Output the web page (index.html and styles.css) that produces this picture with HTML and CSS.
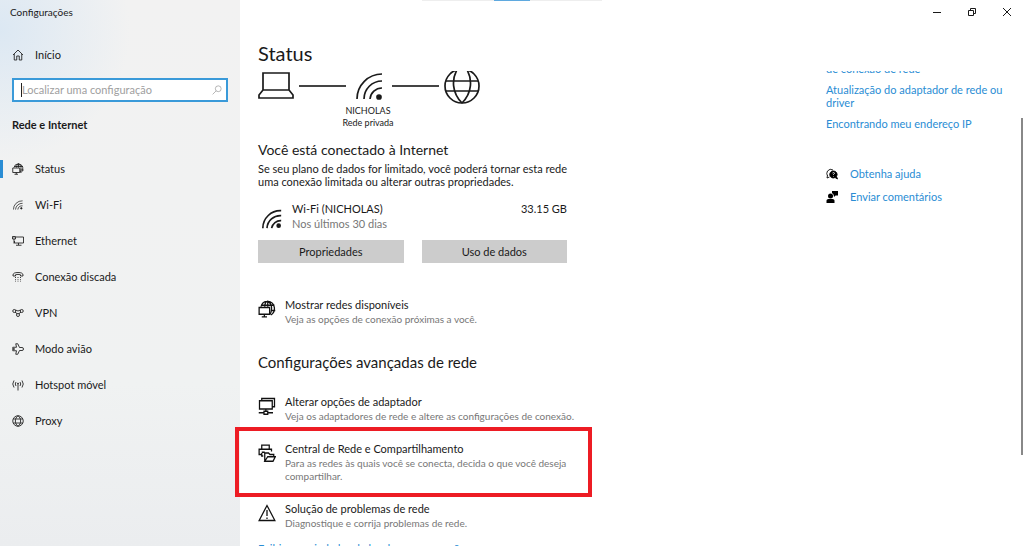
FILE: index.html
```html
<!DOCTYPE html>
<html lang="pt-BR">
<head>
    <meta charset="UTF-8">
    <meta name="viewport" content="width=device-width, initial-scale=1.0">
    <title>Configurações</title>
    <link rel="stylesheet" href="styles.css">
</head>
<body>
    <!-- Shared icons -->
    <svg class="sprite" aria-hidden="true">
        <symbol id="wifi" viewBox="0 0 24 24">
            <path d="M1 23A21 21 0 0 1 23 2M6 23A16 16 0 0 1 23 8M11.500 23A11 11 0 0 1 23 14"/>
            <circle cx="20" cy="20" r="1.800" fill="currentColor"/>
        </symbol>
        <symbol id="globe" viewBox="0 0 24 24">
            <circle cx="12" cy="12" r="10.5"/>
            <path d="M2.5 8h19M2.5 16h19M12 1.5C5 6 5 18 12 22.5M12 1.5C19 6 19 18 12 22.5"/>
        </symbol>
        <symbol id="globe-pc" viewBox="0 0 24 24">
            <path d="M4 9A10 9 0 0 1 13 1.500A10 10 0 0 1 17 20M5 7h17M17 14h6M9 9C9 5 11 2 13 1.500C17 4 18.500 8 18 12Q18 16 16 19M13 2v7"/>
            <path d="M1.500 10h14v9h-14zM8.500 19v3.500M5 22.500h7"/>
        </symbol>
    </svg>

    <div class="window">
        <aside class="sidebar">
            <div class="app-name">Configurações</div>
            <a class="nav-item home" href="#">
                <svg class="icon" viewBox="0 0 24 24"><path d="M2 12L12 2l10 10M4.500 10v12h5v-8h5v8h5V10"/></svg>
                Início
            </a>
            <div class="search">
                <input type="text" id="search" placeholder="Localizar uma configuração" aria-label="Localizar uma configuração">
                <span class="caret"></span>
                <svg class="search-icon" viewBox="0 0 24 24"><circle cx="15" cy="9" r="7"/><path d="M10 14L1.500 22.500"/></svg>
            </div>
            <h2 class="category">Rede e Internet</h2>
            <nav>
                <a class="nav-item active" href="#"><svg class="icon"><use href="#globe-pc"/></svg>Status</a>
                <a class="nav-item" href="#"><svg class="icon small"><use href="#wifi"/></svg>Wi-Fi</a>
                <a class="nav-item" href="#">
                    <svg class="icon" viewBox="0 0 24 24"><path d="M8 4h15v12H5v-4M1 3h6v5H1zM4 8v9M13 16v4M8 20.500h11M3 5.500h2"/></svg>
                    Ethernet
                </a>
                <a class="nav-item" href="#">
                    <svg class="icon" viewBox="0 0 24 24"><path d="M2 8Q2 3 12 3t10 5v2h-5V7.500Q12 6 7 7.500V10H2z"/><path stroke-dasharray="2 2.500" d="M7 12v10M12 12v10M17 12v10"/></svg>
                    Conexão discada
                </a>
                <a class="nav-item" href="#">
                    <svg class="icon" viewBox="0 0 24 24"><circle cx="4.500" cy="8" r="3"/><circle cx="19.500" cy="8" r="3"/><circle cx="12" cy="16" r="3"/><path d="M7 6q5 4 10 0M6 10.500q4 1 4 3.500M18 10.500q-4 1-4 3.500"/></svg>
                    VPN
                </a>
                <a class="nav-item" href="#">
                    <svg class="icon" viewBox="0 0 24 24"><path d="M9 8.500L7.500 1.500h4L15 9h5q3 0 3 3t-3 3h-5l-3.500 7.500h-4L9 15.500H1.500v-3h4M9 8.500H1.500v3h4"/></svg>
                    Modo avião
                </a>
                <a class="nav-item" href="#">
                    <svg class="icon" viewBox="0 0 24 24"><path d="M12 9v14M4 3q-5 7 0 14M8 6q-3 4 0 8M20 3q5 7 0 14M16 6q3 4 0 8"/><circle cx="12" cy="9" r="1"/></svg>
                    Hotspot móvel
                </a>
                <a class="nav-item" href="#"><svg class="icon"><use href="#globe"/></svg>Proxy</a>
            </nav>
        </aside>

        <main class="main">
            <header class="titlebar">
                <button type="button" aria-label="Minimizar"><svg viewBox="0 0 10 10"><path d="M1 5.500h8"/></svg></button>
                <button type="button" aria-label="Restaurar"><svg viewBox="0 0 10 10"><path d="M1.500 3.500h5v5h-5zM3.500 3.500v-2h5v5h-2"/></svg></button>
                <button type="button" aria-label="Fechar"><svg viewBox="0 0 10 10"><path d="M1 1l8 8M9 1L1 9"/></svg></button>
            </header>
            <h1>Status</h1>

            <div class="columns">
                <div class="content">
                    <div class="diagram">
                        <svg class="device" viewBox="0 0 36 33"><path d="M5 2h26v17H5zM5 19L1 24v3h34v-3l-4-5"/></svg>
                        <span class="wire"></span>
                        <svg class="device signal" viewBox="0 0 28 33"><path d="M2 28A25 25 0 0 1 27 3M9 28A18 18 0 0 1 27 10M15 28A12 12 0 0 1 27 17"/><circle cx="24" cy="26" r="2" fill="currentColor"/></svg>
                        <span class="wire"></span>
                        <svg class="device" viewBox="0 0 36 33"><circle cx="18" cy="15" r="17"/><path d="M2 10h32M2 20h32M14 -3C7 8 8 22 18 32M22 -3C29 8 28 22 18 32"/></svg>
                    </div>
                    <p class="network">NICHOLAS<br>Rede privada</p>

                    <h3>Você está conectado à Internet</h3>
                    <p class="message">Se seu plano de dados for limitado, você poderá tornar esta rede uma conexão limitada ou alterar outras propriedades.</p>

                    <div class="usage">
                        <svg class="usage-icon"><use href="#wifi"/></svg>
                        <div class="usage-name">Wi-Fi (NICHOLAS)<br><span>Nos últimos 30 dias</span></div>
                        <div>33.15 GB</div>
                    </div>
                    <div class="buttons">
                        <button type="button">Propriedades</button>
                        <button type="button">Uso de dados</button>
                    </div>

                    <a class="option" href="#">
                        <svg class="option-icon"><use href="#globe-pc"/></svg>
                        <span class="option-text"><strong>Mostrar redes disponíveis</strong>Veja as opções de conexão próximas a você.</span>
                    </a>

                    <h2 class="section-title">Configurações avançadas de rede</h2>
                    <div class="options">
                        <a class="option" href="#">
                            <svg class="option-icon" viewBox="0 0 24 24"><path d="M5 5V2h17v11h-3M2 5h17v11H2zM10.500 16v3M1 21h7M13 21h7M8 19h5v4H8z"/></svg>
                            <span class="option-text"><strong>Alterar opções de adaptador</strong>Veja os adaptadores de rede e altere as configurações de conexão.</span>
                        </a>
                        <a class="option highlight" href="#">
                            <svg class="option-icon" viewBox="0 0 24 24"><path d="M5 7V1.500h10V7M7 16H5v-4M5 14H1.500V7H18v3M5 11h4M9 23V12h5l2 2h5v3M9 23l4-6h10l-3 6z"/></svg>
                            <span class="option-text"><strong>Central de Rede e Compartilhamento</strong>Para as redes às quais você se conecta, decida o que você deseja compartilhar.</span>
                        </a>
                        <a class="option" href="#">
                            <svg class="option-icon" viewBox="0 0 24 24"><path d="M12 2L1.500 22h21zM12 8v8M12 18v2"/></svg>
                            <span class="option-text"><strong>Solução de problemas de rede</strong>Diagnostique e corrija problemas de rede.</span>
                        </a>
                    </div>
                    <a class="more" href="#">Exibir propriedades de hardware e conexão</a>
                </div>

                <div class="related">
                    <div class="cut"><a href="#">de conexão de rede</a></div>
                    <a href="#">Atualização do adaptador de rede ou driver</a>
                    <a href="#">Encontrando meu endereço IP</a>
                    <div class="help">
                        <a href="#">
                            <svg viewBox="0 0 24 24"><path d="M3 16q-3-5 0-10 5-6 11-2M3 15l-1 5 5-2"/><path fill="currentColor" d="M15 6a7 7 0 1 0 3 13l5 3-2-5A7 7 0 0 0 15 6z"/><path class="mark" d="M13 10q2-2 4 0 0 1.500-2 3v1M15 16v1"/></svg>
                            Obtenha ajuda
                        </a>
                        <a href="#">
                            <svg viewBox="0 0 24 24"><g fill="currentColor" stroke="none"><circle cx="9" cy="10" r="5"/><path d="M1 24v-5q0-3 4-3h8q4 0 4 3v5zM12 0h12v9h-5l-3 3-1-5-3-3z"/></g></svg>
                            Enviar comentários
                        </a>
                    </div>
                </div>
            </div>
        </main>

        <div class="tab-edge"></div>
        <div class="scroll-thumb"></div>
    </div>
</body>
</html>
```
FILE: styles.css
```css
* {
    box-sizing: border-box;
}

body {
    margin: 0;
    font-family: Lato, "Open Sans", sans-serif;
    font-size: 11px;
    line-height: 14px;
    color: #1a1a1a;
    background: #fff;
}

h1, h2, h3, p {
    margin: 0;
    font-weight: normal;
}

a {
    color: #2a8dd4;
    text-decoration: none;
}

button {
    font: inherit;
    color: inherit;
    border: none;
    padding: 0;
}

svg {
    flex: none;
    fill: none;
    stroke: currentColor;
    stroke-width: 1.7;
}

.sprite {
    position: absolute;
    width: 0;
    height: 0;
}

.window {
    position: relative;
    display: flex;
    height: 100vh;
    overflow: hidden;
}

/* Sidebar */
.sidebar {
    flex: none;
    width: 240px;
    background: radial-gradient(circle at 0 30px, #dce8f3 0, rgba(220, 232, 243, 0) 130px), linear-gradient(#f2f2f2, #f0f2f2 70%, #ebedef);
}

.app-name {
    padding: 5px 10px 0;
    height: 37px;
    font-size: 10px;
}

.nav-item {
    position: relative;
    display: flex;
    align-items: center;
    gap: 11px;
    height: 36px;
    padding-left: 12px;
    color: #1a1a1a;
}

.icon {
    width: 12px;
    height: 12px;
}

.icon.small {
    width: 10px;
    height: 10px;
    margin: 0 1px;
}

.active::before {
    content: "";
    position: absolute;
    left: 0;
    top: 9px;
    width: 3px;
    height: 18px;
    background: #2a8dd4;
}

.search {
    position: relative;
    margin: 5px 12px 0;
}

.search input {
    display: block;
    width: 100%;
    height: 24px;
    padding: 0 24px 2px 8px;
    border: 2px solid #3a9ad9;
    font: inherit;
    background: #fff;
}

.search input::placeholder {
    color: #a0a0a0;
}

.caret {
    position: absolute;
    left: 9px;
    top: 5px;
    width: 1px;
    height: 14px;
    background: #222;
}

.search-icon {
    position: absolute;
    right: 6px;
    top: 7px;
    width: 10px;
    height: 10px;
    color: #999;
}

.category {
    padding: 16px 12px 19px;
    font-size: 11px;
    font-weight: bold;
}

/* Main area */
.main {
    flex: 1;
    padding-left: 18px;
}

.titlebar {
    display: flex;
    justify-content: flex-end;
    height: 24px;
}

.titlebar button {
    display: flex;
    align-items: center;
    justify-content: center;
    width: 35px;
    background: none;
}

.titlebar svg {
    width: 10px;
    height: 10px;
    stroke-width: 1;
}

h1 {
    height: 47px;
    padding-top: 15px;
    font-size: 20px;
    line-height: 28px;
}

.columns {
    display: flex;
    justify-content: space-between;
}

.content {
    width: 318px;
}

.diagram {
    display: flex;
    gap: 5px;
}

.device {
    width: 36px;
    height: 33px;
}

.signal {
    width: 28px;
    margin: 0 4px;
}

.wire {
    width: 47px;
    height: 2px;
    margin-top: 14px;
    background: #444;
}

.network {
    width: 220px;
    padding-top: 1px;
    font-size: 9px;
    line-height: 12px;
    text-align: center;
}

h3 {
    margin-top: 12px;
    font-size: 14px;
    line-height: 18px;
}

.message {
    margin-top: 3px;
    line-height: 13px;
}

.usage {
    display: flex;
    width: 309px;
    margin-top: 13px;
    line-height: 15px;
}

.usage-icon {
    width: 20px;
    height: 20px;
    margin: 8px 10px 0 4px;
    stroke-width: 2;
}

.usage-name {
    flex: 1;
}

.usage-name span {
    color: #777;
}

.buttons {
    display: grid;
    grid-template-columns: 1fr 1fr;
    gap: 18px;
    width: 309px;
    margin: 9px 0 34px;
}

.buttons button {
    height: 23px;
    background: #ccc;
}

.option {
    position: relative;
    display: flex;
    gap: 9px;
    color: #777;
    font-size: 10px;
}

.option-icon {
    width: 18px;
    height: 18px;
    margin-top: 3px;
    color: #111;
}

.option-text {
    flex: 1;
    line-height: 13px;
}

.option-text strong {
    display: block;
    color: #1a1a1a;
    font-size: 11px;
    font-weight: normal;
    line-height: 16px;
}

.section-title {
    margin: 24px 0 20px;
    font-size: 15px;
    line-height: 24px;
}

.options {
    display: grid;
    gap: 18px;
}

.highlight::after {
    content: "";
    position: absolute;
    top: -14px;
    bottom: -14px;
    left: -23px;
    right: -16px;
    border: 4px solid #ed1c24;
}

.more {
    display: block;
    margin-top: 12px;
}

/* Related links */
.related {
    display: flex;
    flex-direction: column;
    gap: 8px;
    width: 198px;
    padding-right: 20px;
    line-height: 13px;
}

.cut {
    display: flex;
    align-items: flex-end;
    height: 4px;
    overflow: hidden;
}

.help {
    display: grid;
    gap: 10px;
    margin-top: 29px;
}

.help a {
    display: flex;
    align-items: center;
    gap: 12px;
}

.help svg {
    width: 12px;
    height: 12px;
    color: #000;
}

.mark {
    stroke: #fff;
}

.tab-edge {
    position: absolute;
    top: 0;
    left: 422px;
    width: 180px;
    height: 1px;
    background: linear-gradient(90deg, #eee 40%, #5fa9df 40%, #5fa9df 60%, #eee 60%);
}

.scroll-thumb {
    position: absolute;
    top: 118px;
    right: 1px;
    width: 2px;
    height: 337px;
    background: #888;
}
```
